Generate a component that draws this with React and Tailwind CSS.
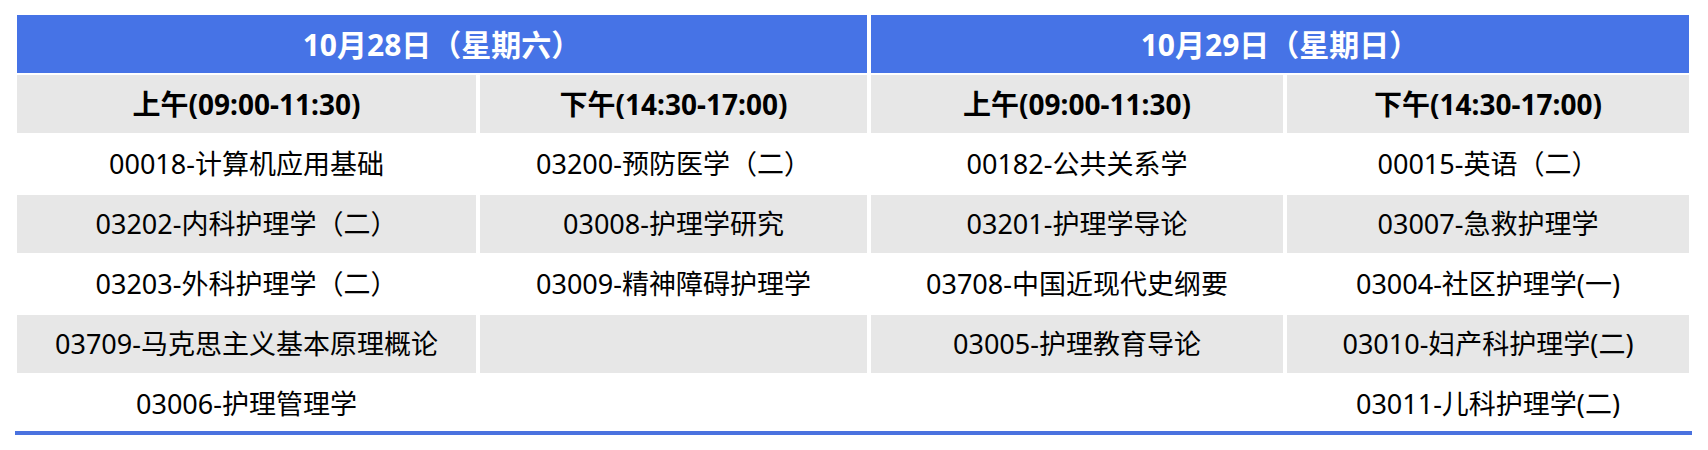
import React from "react"

const days = [
  { title: "10月28日（星期六）" },
  { title: "10月29日（星期日）" },
]

const slots = ["上午(09:00-11:30)", "下午(14:30-17:00)", "上午(09:00-11:30)", "下午(14:30-17:00)"]

// 每行四列：28日上午 / 28日下午 / 29日上午 / 29日下午
const rows = [
  ["00018-计算机应用基础", "03200-预防医学（二）", "00182-公共关系学", "00015-英语（二）"],
  ["03202-内科护理学（二）", "03008-护理学研究", "03201-护理学导论", "03007-急救护理学"],
  ["03203-外科护理学（二）", "03009-精神障碍护理学", "03708-中国近现代史纲要", "03004-社区护理学(一)"],
  ["03709-马克思主义基本原理概论", "", "03005-护理教育导论", "03010-妇产科护理学(二)"],
  ["03006-护理管理学", "", "", "03011-儿科护理学(二)"],
]

export default function App() {
  return (
    <div
      className="bg-white w-[1708px] h-[450px] pt-[15px] text-black"
      style={{ fontFamily: '"Noto Sans", "Noto Sans CJK SC", sans-serif' }}
    >
      <div className="ml-[17px] w-[1672px] grid grid-cols-[459px_387px_412px_402px] gap-x-[4px] gap-y-[2px]">
        {/* 日期标题 */}
        {days.map((d) => (
          <div
            key={d.title}
            className="col-span-2 h-[58px] bg-[#4673e6] text-white font-bold text-[30px] flex items-center justify-center"
          >
            {d.title}
          </div>
        ))}

        {/* 时间段 */}
        {slots.map((s, i) => (
          <div
            key={i}
            className="h-[58px] bg-[#e7e7e7] font-bold text-[28px] flex items-center justify-center"
          >
            {s}
          </div>
        ))}

        {/* 科目 */}
        {rows.map((row, r) =>
          row.map((cell, c) => (
            <div
              key={`${r}-${c}`}
              className={`h-[58px] text-[27px] flex items-center justify-center ${
                r % 2 === 1 ? "bg-[#e7e7e7]" : "bg-white"
              }`}
            >
              {cell}
            </div>
          ))
        )}
      </div>
      <div className="relative ml-[15px] w-[1677px] h-[4px] -mt-[2px] bg-[#4a72df]"></div>
    </div>
  )
}
